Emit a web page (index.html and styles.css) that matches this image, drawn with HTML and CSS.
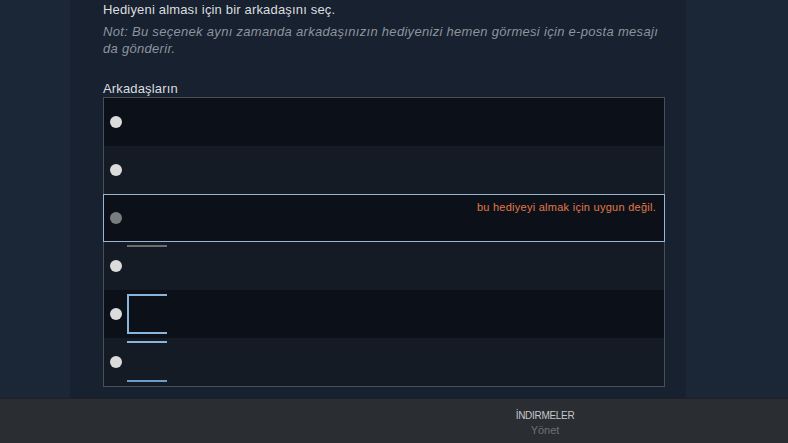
FILE: index.html
```html
<!DOCTYPE html>
<html lang="tr">
<head>
<meta charset="utf-8">
<link rel="stylesheet" href="styles.css">
</head>
<body>
<div class="page">
  <div class="side"></div>
  <div class="panel">
    <div class="intro">Hediyeni alması için bir arkadaşını seç.</div>
    <div class="note">Not: Bu seçenek aynı zamanda arkadaşınızın hediyenizi hemen görmesi için e-posta mesajı da gönderir.</div>
    <div class="label">Arkadaşların</div>
    <div class="list">
      <div class="row dark"><span class="radio"></span><span class="av"></span></div>
      <div class="row light"><span class="radio"></span><span class="av"></span></div>
      <div class="row dark selected"><span class="radio off"></span><span class="av"></span><span class="err">bu hediyeyi almak için uygun değil.</span></div>
      <div class="row light"><span class="radio"></span><span class="av av-gray"></span></div>
      <div class="row dark"><span class="radio"></span><span class="av av-box"></span></div>
      <div class="row light"><span class="radio"></span><span class="av av-lines"></span></div>
    </div>
  </div>
  <div class="side"></div>
</div>
<div class="footer">
  <div class="dl">
    <div class="dl-title">İNDIRMELER</div>
    <div class="dl-sub">Yönet</div>
  </div>
</div>
</body>
</html>
```
FILE: styles.css
```css
html, body {
  margin: 0;
  padding: 0;
  height: 443px;
  overflow: hidden;
  background: #1b2636;
  font-family: "Liberation Sans", Arial, sans-serif;
}
body {
  display: flex;
  flex-direction: column;
}
.page {
  flex: 1;
  display: flex;
  min-height: 0;
}
.side {
  width: 70px;
  background: #1b2637;
}
.side:last-child {
  flex: 1;
}
.panel {
  width: 616px;
  background: #172130;
  padding: 1px 0 0 33px;
  box-sizing: border-box;
  display: flex;
  flex-direction: column;
}
.intro {
  color: #dcdedf;
  font-size: 13px;
  line-height: 17px;
  letter-spacing: 0.17px;
  width: 562px;
}
.note {
  color: #8c949c;
  font-style: italic;
  font-size: 13px;
  line-height: 17px;
  letter-spacing: 0.3px;
  margin-top: 5px;
  width: 562px;
}
.label {
  color: #dcdedf;
  font-size: 13px;
  line-height: 17px;
  letter-spacing: 0.15px;
  margin-top: 23px;
}
.list {
  width: 562px;
  border: 1px solid #4a5059;
  box-sizing: border-box;
  margin-top: 0;
  display: flex;
  flex-direction: column;
}
.row {
  height: 48px;
  display: flex;
  align-items: center;
  position: relative;
  box-sizing: border-box;
  padding-left: 6px;
}
.dark { background: #0c1119; }
.light { background: #141b25; }
.selected {
  border: 1px solid #98b5d1;
  margin: 0 -1px;
  padding-left: 6px;
}
.radio {
  width: 12px;
  height: 12px;
  border-radius: 50%;
  background: #dcdcdc;
  flex: none;
}
.radio.off { background: #7a7d80; }
.av {
  width: 40px;
  height: 40px;
  margin-left: 5px;
  box-sizing: border-box;
  flex: none;
}
.av-gray {
  border-top: 2px solid #6b6e73;
  align-self: flex-start;
  margin-top: 3px;
}
.av-box {
  height: 40px;
  border: 2px solid #8ab4dc;
  border-right: none;
  margin-top: 4px;
  align-self: flex-start;
}
.av-lines {
  height: 41px;
  border-top: 2px solid #8ab4dc;
  border-bottom: 2px solid #6c9cc8;
  align-self: flex-start;
  margin-top: 3px;
}
.err {
  position: absolute;
  right: 8px;
  top: 5px;
  color: #e0784a;
  font-size: 11px;
  line-height: 14px;
  letter-spacing: 0.26px;
}
.footer {
  height: 45px;
  flex: none;
  background: #2a2d32;
  border-top: 1px solid #1e2126;
  box-sizing: border-box;
  display: flex;
  justify-content: center;
  padding-left: 302px;
}
.dl {
  text-align: center;
  padding-top: 10px;
}
.dl-title {
  color: #c5c7ca;
  font-size: 10px;
  line-height: 14px;
  letter-spacing: -0.3px;
}
.dl-sub {
  color: #6d7177;
  font-size: 11px;
  line-height: 14px;
}
```
